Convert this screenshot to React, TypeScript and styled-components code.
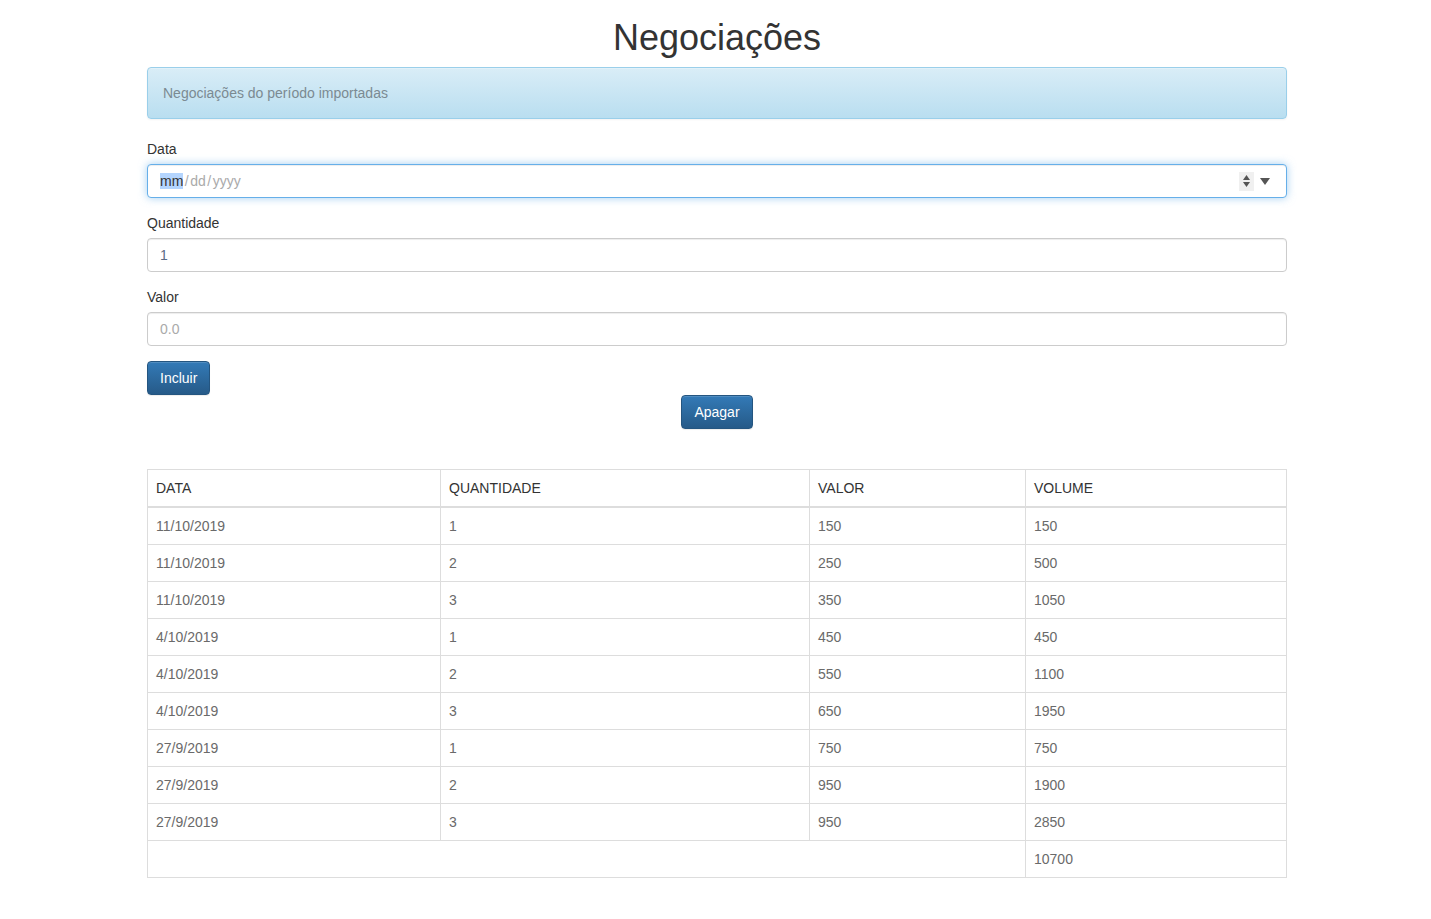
import styled, { createGlobalStyle } from "styled-components";

const GlobalStyle = createGlobalStyle`
  html, body {
    margin: 0;
    padding: 0;
    background: #fff;
  }
  body {
    font-family: "Liberation Sans", Arial, Helvetica, sans-serif;
    font-size: 14px;
    line-height: 20px;
    color: #333;
  }
  * {
    box-sizing: border-box;
  }
`;

const S = {
  Container: styled.div`
    width: 1140px;
    margin-left: calc((100% - 1140px) / 2 + 1.5px);
    padding-bottom: 20px;
  `,
  Title: styled.h1`
    margin: 18px 0 9px;
    font-size: 36px;
    font-weight: 500;
    line-height: 40px;
    text-align: center;
    color: #333;
  `,
  Alert: styled.div`
    padding: 15px;
    margin-bottom: 20px;
    border: 1px solid #9acfea;
    border-radius: 4px;
    background-image: linear-gradient(to bottom, #d9edf7 0, #b9def0 100%);
    box-shadow: inset 0 1px 0 rgba(255, 255, 255, 0.25), 0 1px 2px rgba(0, 0, 0, 0.05);
    color: #7b8a92;
  `,
  Group: styled.div`
    margin-bottom: 15px;
  `,
  Label: styled.label`
    display: block;
    margin-bottom: 5px;
    color: #333;
  `,
  Field: styled.div<{ $focused?: boolean }>`
    display: flex;
    align-items: center;
    height: 34px;
    padding: 6px 16px 6px 12px;
    border: 1px solid ${(p) => (p.$focused ? "#66afe9" : "#ccc")};
    border-radius: 4px;
    background: #fff;
    box-shadow: inset 0 1px 1px rgba(0, 0, 0, 0.075)
      ${(p) => (p.$focused ? ", 0 0 8px rgba(102, 175, 233, 0.6)" : "")};
    color: #555;
  `,
  Value: styled.span<{ $muted?: boolean }>`
    color: ${(p) => (p.$muted ? "#aaa" : "#5b6b85")};
  `,
  DateText: styled.span`
    flex: 1;
    color: #aaa;
  `,
  Slash: styled.span`
    padding: 0 1.5px;
  `,
  Selected: styled.span`
    background: #b4d5fe;
    color: #333;
  `,
  Spinner: styled.span`
    display: flex;
    flex-direction: column;
    align-items: center;
    justify-content: center;
    gap: 2px;
    width: 15px;
    height: 19px;
    margin-right: 6px;
    background: #f0f0f0;
  `,
  Button: styled.button`
    display: inline-block;
    height: 34px;
    padding: 6px 12px;
    border: 1px solid #245580;
    border-radius: 4px;
    background-image: linear-gradient(to bottom, #337ab7 0, #265a88 100%);
    box-shadow: inset 0 1px 0 rgba(255, 255, 255, 0.15), 0 1px 1px rgba(0, 0, 0, 0.075);
    color: #fff;
    font-family: inherit;
    font-size: 14px;
    line-height: 20px;
    cursor: pointer;
  `,
  Center: styled.div`
    text-align: center;
    margin-bottom: 40px;
  `,
  Table: styled.table`
    width: 100%;
    border-collapse: collapse;
    border: 1px solid #ddd;
  `,
  Th: styled.th<{ $w?: number }>`
    width: ${(p) => (p.$w ? `${p.$w}px` : "auto")};
    padding: 8px;
    border: 1px solid #ddd;
    border-bottom: 2px solid #ddd;
    text-align: left;
    font-weight: 400;
    color: #333;
  `,
  Td: styled.td`
    padding: 8px;
    border: 1px solid #ddd;
    color: #6a6a6a;
    height: 37px;
  `,
};

const rows = [
  ["11/10/2019", "1", "150", "150"],
  ["11/10/2019", "2", "250", "500"],
  ["11/10/2019", "3", "350", "1050"],
  ["4/10/2019", "1", "450", "450"],
  ["4/10/2019", "2", "550", "1100"],
  ["4/10/2019", "3", "650", "1950"],
  ["27/9/2019", "1", "750", "750"],
  ["27/9/2019", "2", "950", "1900"],
  ["27/9/2019", "3", "950", "2850"],
];

const Arrow = ({ up, size = 7 }: { up?: boolean; size?: number }) => (
  <svg width={size} height={size * 0.7} viewBox="0 0 10 7">
    <path d={up ? "M0 7 L5 0 L10 7 Z" : "M0 0 L10 0 L5 7 Z"} fill="#555" />
  </svg>
);

export default function App() {
  return (
    <>
      <GlobalStyle />
      <S.Container>
        <S.Title>Negociações</S.Title>
        <S.Alert>Negociações do período importadas</S.Alert>

        <S.Group>
          <S.Label>Data</S.Label>
          <S.Field $focused>
            <S.DateText>
              <S.Selected>mm</S.Selected>
              <S.Slash>/</S.Slash>dd<S.Slash>/</S.Slash>yyyy
            </S.DateText>
            <S.Spinner>
              <Arrow up />
              <Arrow />
            </S.Spinner>
            <Arrow size={10} />
          </S.Field>
        </S.Group>

        <S.Group>
          <S.Label>Quantidade</S.Label>
          <S.Field>
            <S.Value>1</S.Value>
          </S.Field>
        </S.Group>

        <S.Group>
          <S.Label>Valor</S.Label>
          <S.Field>
            <S.Value $muted>0.0</S.Value>
          </S.Field>
        </S.Group>

        <S.Button>Incluir</S.Button>
        <S.Center>
          <S.Button>Apagar</S.Button>
        </S.Center>

        <S.Table>
          <thead>
            <tr>
              <S.Th $w={293}>DATA</S.Th>
              <S.Th $w={369}>QUANTIDADE</S.Th>
              <S.Th $w={216}>VALOR</S.Th>
              <S.Th>VOLUME</S.Th>
            </tr>
          </thead>
          <tbody>
            {rows.map((r, i) => (
              <tr key={i}>
                {r.map((c, j) => (
                  <S.Td key={j}>{c}</S.Td>
                ))}
              </tr>
            ))}
          </tbody>
          <tfoot>
            <tr>
              <S.Td colSpan={3} />
              <S.Td>10700</S.Td>
            </tr>
          </tfoot>
        </S.Table>
      </S.Container>
    </>
  );
}
